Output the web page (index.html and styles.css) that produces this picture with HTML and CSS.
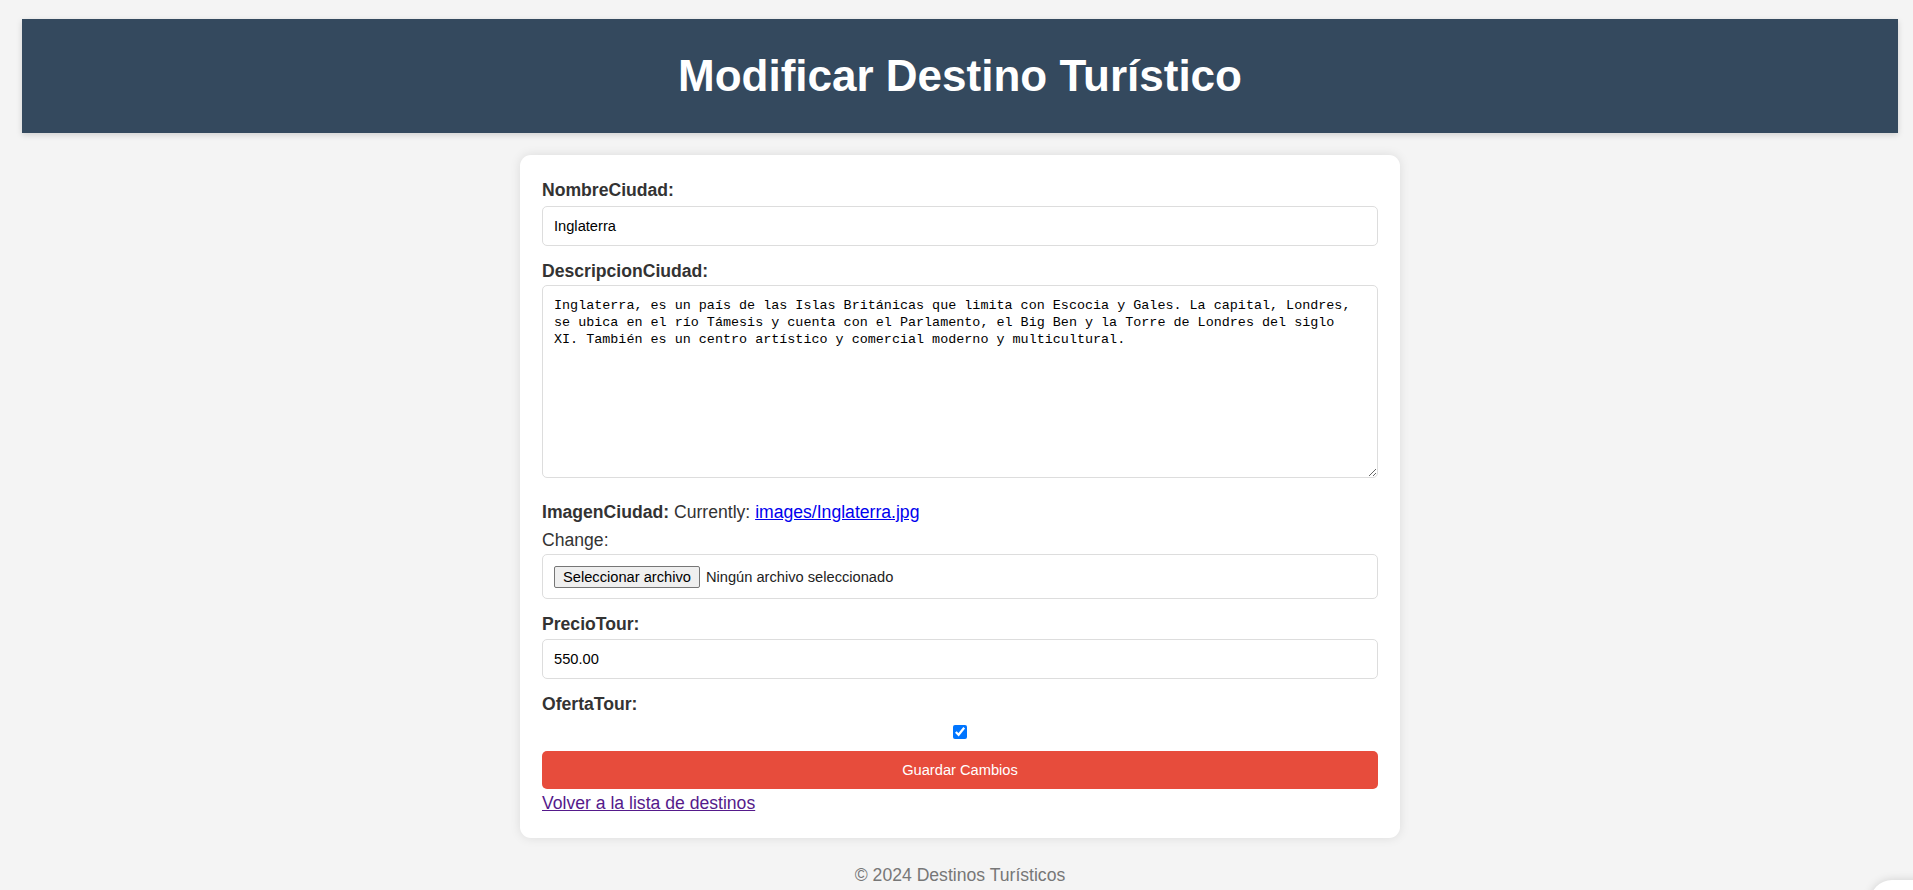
FILE: index.html
```html
<!DOCTYPE html>
<html lang="es">
<head>
<meta charset="utf-8">
<title>Modificar Destino Turístico</title>
<link rel="stylesheet" href="styles.css">
</head>
<body>
<div class="page">
  <header class="site-header">
    <h1 class="site-title">Modificar Destino Turístico</h1>
  </header>
  <main class="card">
    <form class="form">
      <label class="field-label" for="nombre">NombreCiudad:</label>
      <input class="field-input" id="nombre" type="text" value="Inglaterra">

      <label class="field-label label-tight" for="desc">DescripcionCiudad:</label>
      <textarea class="field-textarea" id="desc">Inglaterra, es un país de las Islas Británicas que limita con Escocia y Gales. La capital, Londres, se ubica en el río Támesis y cuenta con el Parlamento, el Big Ben y la Torre de Londres del siglo XI. También es un centro artístico y comercial moderno y multicultural.</textarea>

      <div class="image-line"><span class="field-label inline">ImagenCiudad:</span> Currently: <a class="current-link" href="#">images/Inglaterra.jpg</a></div>
      <div class="change-line">Change:</div>
      <div class="file-box">
        <span class="file-button">Seleccionar archivo</span>
        <span class="file-status">Ningún archivo seleccionado</span>
      </div>

      <label class="field-label label-price" for="precio">PrecioTour:</label>
      <input class="field-input" id="precio" type="text" value="550.00">

      <label class="field-label" for="oferta">OfertaTour:</label>
      <div class="check-row"><input class="check" id="oferta" type="checkbox" checked></div>

      <button class="save-button" type="button">Guardar Cambios</button>
      <a class="back-link" href="#">Volver a la lista de destinos</a>
    </form>
  </main>
  <footer class="site-footer">© 2024 Destinos Turísticos</footer>
</div>
<div class="corner-widget"></div>
</body>
</html>
```
FILE: styles.css
```css
html, body {
  margin: 0;
  padding: 0;
}

body {
  background: #f4f4f4;
  font-family: "Liberation Sans", Arial, sans-serif;
  font-size: 17.6px;
  color: #333;
  overflow: hidden;
}

.page {
  width: 1920px;
}

.site-header {
  margin: 19px 22px 0;
  height: 114px;
  background: #34495e;
  color: #fff;
  display: flex;
  align-items: center;
  justify-content: center;
  box-shadow: 0 2px 6px rgba(0, 0, 0, 0.15);
}

.site-title {
  margin: 0;
  font-size: 44px;
  font-weight: bold;
  line-height: 1.15;
}

.card {
  box-sizing: border-box;
  width: 880px;
  margin: 22px auto 0;
  background: #fff;
  border-radius: 11px;
  padding: 25px 22px;
  box-shadow: 0 0 11px rgba(0, 0, 0, 0.1);
}

.form {
  display: flex;
  flex-direction: column;
  align-items: stretch;
}

.field-label {
  display: block;
  font-weight: bold;
  line-height: 20px;
  margin-bottom: 6px;
}

.field-label.inline {
  display: inline;
  margin: 0;
}

.label-tight {
  margin-bottom: 4px;
}

.label-price {
  margin-bottom: 5px;
}

.field-input {
  display: block;
  box-sizing: border-box;
  width: 100%;
  height: 40px;
  margin: 0 0 15px;
  padding: 0 11px;
  border: 1px solid #ddd;
  border-radius: 5px;
  background: #fff;
  font-family: "Liberation Sans", Arial, sans-serif;
  font-size: 14.67px;
  color: #000;
}

.field-textarea {
  display: block;
  box-sizing: border-box;
  width: 100%;
  height: 193px;
  margin: 0 0 24px;
  padding: 11px;
  border: 1px solid #ddd;
  border-radius: 5px;
  font-family: "Liberation Mono", "DejaVu Sans Mono", monospace;
  font-size: 13.42px;
  line-height: 17px;
  color: #000;
}

.image-line {
  line-height: 20px;
}

.current-link {
  color: #0000ee;
  text-decoration: underline;
}

.change-line {
  line-height: 20px;
  margin-top: 8px;
  margin-bottom: 4px;
}

.file-box {
  box-sizing: border-box;
  height: 45px;
  border: 1px solid #ddd;
  border-radius: 5px;
  padding: 0 11px;
  display: flex;
  align-items: center;
  margin-bottom: 15px;
  font-size: 14.67px;
}

.file-button {
  box-sizing: border-box;
  height: 22px;
  padding: 0 8px;
  display: flex;
  align-items: center;
  border: 1px solid #767676;
  border-radius: 2px;
  background: #efefef;
  color: #000;
}

.file-status {
  margin-left: 6px;
  color: #222;
}

.check-row {
  display: flex;
  justify-content: center;
  margin-top: 5px;
  margin-bottom: 12px;
}

.check {
  width: 14px;
  height: 14px;
  margin: 0;
}

.save-button {
  display: block;
  width: 100%;
  height: 38px;
  border: none;
  border-radius: 5px;
  background: #e74c3c;
  color: #fff;
  font-family: "Liberation Sans", Arial, sans-serif;
  font-size: 14.67px;
}

.back-link {
  align-self: flex-start;
  margin-top: 4px;
  line-height: 20px;
  color: #551a8b;
  text-decoration: underline;
}

.site-footer {
  margin-top: 27px;
  text-align: center;
  line-height: 20px;
  color: #777;
}

.corner-widget {
  position: fixed;
  left: 1870px;
  top: 880px;
  width: 80px;
  height: 80px;
  border-radius: 22px;
  background: #fff;
  box-shadow: 0 0 10px rgba(0, 0, 0, 0.15);
}
```
